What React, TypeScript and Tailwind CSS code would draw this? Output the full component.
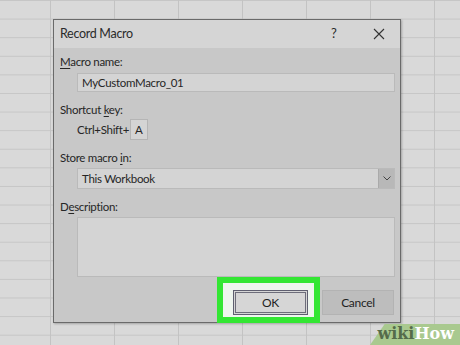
import React from 'react'

const font = { fontFamily: 'Lato, "Noto Sans", "Liberation Sans", sans-serif' }

interface FieldLabelProps {
  before?: string
  ul: string
  after: string
  className?: string
}

const FieldLabel: React.FC<FieldLabelProps> = ({ before = '', ul, after, className }) => (
  <div className={'h-[16px] text-[11.5px] tracking-[-0.3px] leading-[16px] text-[#262626] ' + (className ?? '')}>
    {before}
    <span className="underline underline-offset-2">{ul}</span>
    {after}
  </div>
)

export default function App() {
  return (
    <div
      style={font}
      className="relative w-[460px] h-[345px] overflow-hidden bg-[#d9d9d9] bg-[linear-gradient(to_right,#c3c3c3_1px,transparent_1px),linear-gradient(to_bottom,#c6c6c6_1px,transparent_1px)] bg-[size:64px_18.6px] bg-[position:50px_0px]"
    >
      {/* dialog */}
      <div className="ml-[53px] mt-[19px] w-[348px] h-[304px] flex flex-col border border-[#6a6a6a] bg-[#c8c8c8] shadow-[1px_1px_2px_rgba(0,0,0,0.25)]">
        {/* title bar */}
        <div className="h-[28px] flex items-center bg-[#d5d5d5] pl-[6px] text-[#2a2a2a]">
          <span className="text-[12.5px] tracking-[-0.3px]">Record Macro</span>
          <span className="ml-auto w-[10px] text-center text-[13px]">?</span>
          <svg className="ml-[34px] mr-[15px]" width="12" height="12" viewBox="0 0 12 12">
            <path d="M1 1L11 11M11 1L1 11" stroke="#333" strokeWidth="1.1" />
          </svg>
        </div>

        {/* body */}
        <div className="flex-1 flex flex-col pl-[6px] text-[11.5px] tracking-[-0.3px] text-[#262626]">
          <FieldLabel className="mt-[6px]" ul="M" after="acro name:" />
          <div className="mt-[3px] ml-[17px] w-[318px] h-[19px] flex items-center pl-[4px] bg-[#d4d4d4] border border-[#bababa]">
            MyCustomMacro_01
          </div>

          <FieldLabel className="mt-[10px]" before="Shortcut " ul="k" after="ey:" />
          <div className="mt-[1px] ml-[17px] h-[21px] flex items-center">
            <span className="w-[51px]">Ctrl+Shift+</span>
            <div className="ml-[2px] w-[18px] h-[21px] flex items-center pl-[4px] bg-[#d4d4d4] border border-[#b5b5b5]">
              A
            </div>
          </div>

          <FieldLabel className="mt-[10px]" before="Store macro " ul="i" after="n:" />
          <div className="mt-[2px] ml-[17px] w-[318px] h-[21px] flex items-center bg-[#d4d4d4] border border-[#bababa]">
            <span className="pl-[4px] flex-1">This Workbook</span>
            <div className="w-[16px] h-full flex items-center justify-center bg-[#b8b8b8] border-l border-[#aaaaaa]">
              <svg width="8" height="5" viewBox="0 0 8 5">
                <path d="M0.5 0.5L4 4L7.5 0.5" fill="none" stroke="#444" strokeWidth="1" />
              </svg>
            </div>
          </div>

          <FieldLabel className="mt-[10px]" before="D" ul="e" after="scription:" />
          <div className="mt-[2px] ml-[17px] w-[318px] h-[60px] bg-[#d4d4d4] border border-[#bababa]" />

          {/* buttons */}
          <div className="mt-[13px] ml-[173px] flex items-center gap-[14px] text-[12px] text-[#1f1f1f]">
            <div className="relative">
              <div className="absolute -left-[16px] -top-[13px] w-[103px] h-[46px] border-[6px] border-[#33e633] bg-[#eef5ee]" />
              <div className="relative w-[75px] h-[25px] flex items-center justify-center border border-[#5f5f70] bg-[#d6d6d6] outline outline-1 -outline-offset-[3px] outline-[#6d6d7a]">
                OK
              </div>
            </div>
            <div className="w-[72px] h-[25px] flex items-center justify-center bg-[#bdbdbd] border border-[#b3b3b3]">
              Cancel
            </div>
          </div>
        </div>
      </div>

      {/* watermark */}
      <div className="absolute right-[-10px] bottom-0 w-[100px] h-[21px] bg-[#a9c98f] -skew-x-[35deg] origin-bottom" />
      <div
        className="absolute right-[6px] bottom-[2px] text-[16px] font-bold leading-[18px]"
        style={{ fontFamily: '"DejaVu Serif", "Liberation Serif", serif' }}
      >
        <span className="text-[#556b4a]">wiki</span>
        <span className="text-white">How</span>
      </div>
    </div>
  )
}
